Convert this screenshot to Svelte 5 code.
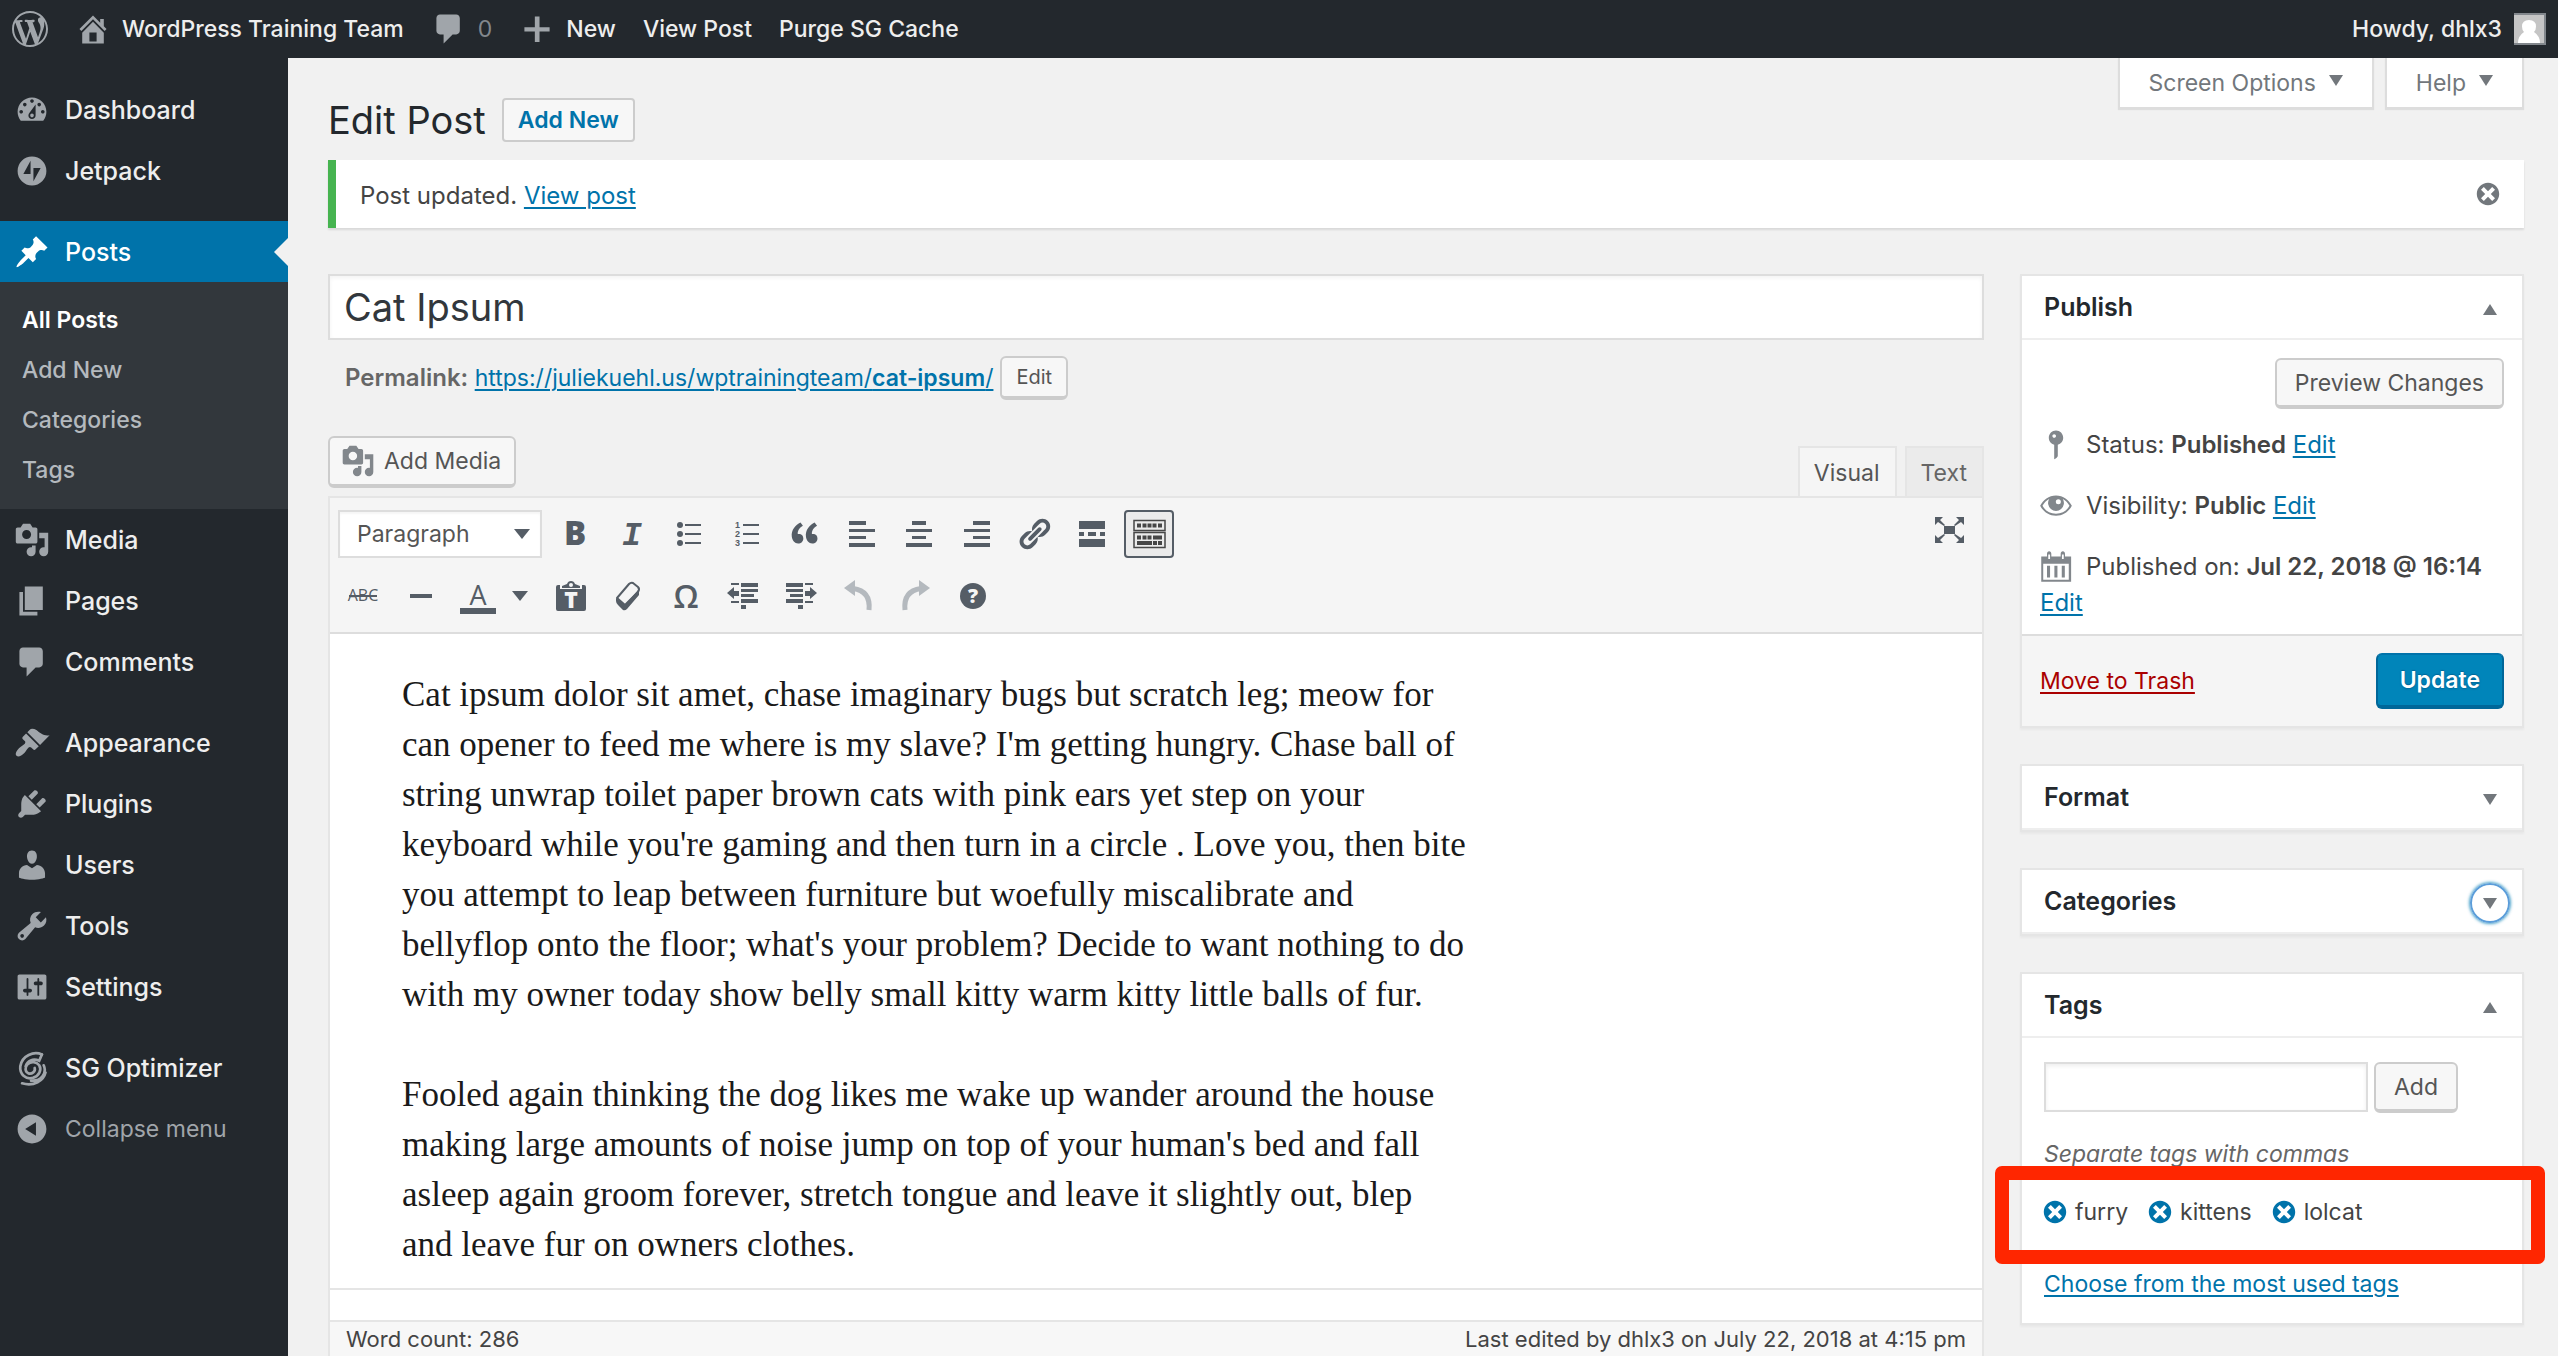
<script>
  const icons = {
    wordpress: 'M20 10c0-5.51-4.49-10-10-10C4.48 0 0 4.49 0 10c0 5.52 4.48 10 10 10 5.51 0 10-4.48 10-10zM7.78 15.37L4.37 6.22c.55-.02 1.17-.08 1.17-.08.5-.06.44-1.13-.06-1.11 0 0-1.45.11-2.37.11-.18 0-.37 0-.58-.01C4.12 2.69 6.87 1.11 10 1.11c2.33 0 4.45.87 6.05 2.34-.68-.11-1.65.39-1.65 1.58 0 .74.45 1.36.9 2.1.35.61.55 1.36.55 2.46 0 1.49-1.4 5-1.4 5l-3.03-8.37c.54-.02.82-.17.82-.17.5-.05.44-1.25-.06-1.22 0 0-1.44.12-2.38.12-.87 0-2.33-.12-2.33-.12-.5-.03-.56 1.2-.06 1.22l.92.08 1.26 3.41zM17.41 10c.24-.64.74-1.87.43-4.25.7 1.29 1.05 2.71 1.05 4.25 0 3.29-1.73 6.24-4.4 7.78.97-2.59 1.94-5.2 2.92-7.78zM6.1 18.09C3.12 16.65 1.11 13.53 1.11 10c0-1.3.23-2.48.72-3.59C3.25 10.3 4.67 14.2 6.1 18.09zm4.03-6.63l2.58 6.98c-.86.29-1.76.45-2.71.45-.79 0-1.57-.11-2.29-.33.81-2.38 1.62-4.74 2.42-7.1z',
    home: 'M16 8.5l1.53 1.53-1.06 1.06L10 4.6l-6.47 6.49-1.06-1.06L10 2.5l4 4v-2h2v4zm-6-2.46l6 5.99V18H4v-5.97zM12 17v-5H8v5h4z',
    comment: 'M5 2h9c1.1 0 2 .9 2 2v7c0 1.1-.9 2-2 2h-2l-5 5v-5H5c-1.1 0-2-.9-2-2V4c0-1.1.9-2 2-2z',
    plus: 'M17 9v2.4h-5.6v5.8H8.8v-5.8H3V9h5.8V3h2.6v6H17z',
    dashboard: 'M3.76 16h12.48c1.1-1.37 1.76-3.11 1.76-5 0-4.42-3.58-8-8-8s-8 3.58-8 8c0 1.89.66 3.63 1.76 5zM10 4c.55 0 1 .45 1 1s-.45 1-1 1-1-.45-1-1 .45-1 1-1zM6 6c.55 0 1 .45 1 1s-.45 1-1 1-1-.45-1-1 .45-1 1-1zm8 0c.55 0 1 .45 1 1s-.45 1-1 1-1-.45-1-1 .45-1 1-1zm-5.37 5.55L12 7v6c0 1.1-.9 2-2 2s-2-.9-2-2c0-.57.24-1.08.63-1.45zM4 10c.55 0 1 .45 1 1s-.45 1-1 1-1-.45-1-1 .45-1 1-1zm12 0c.55 0 1 .45 1 1s-.45 1-1 1-1-.45-1-1 .45-1 1-1zm-5 3c0-.55-.45-1-1-1s-1 .45-1 1 .45 1 1 1 1-.45 1-1z',
    jetpack: 'M10 2a8 8 0 1 0 0 16 8 8 0 0 0 0-16zM9.2 11.7H5.2L9.2 4.3zM10.8 15.7V8.3h4z',
    pin: 'M10.44 3.02l1.82-1.82 6.36 6.35-1.83 1.82c-1.05-.68-2.48-.57-3.41.36l-.75.75c-.92.93-1.04 2.35-.35 3.41l-1.83 1.82-2.41-2.41-2.8 2.79c-.42.42-3.38 2.71-3.8 2.29s1.86-3.39 2.28-3.81l2.79-2.79L4.1 9.36l1.83-1.82c1.05.69 2.48.57 3.4-.36l.75-.75c.93-.92 1.05-2.35.36-3.41z',
    media: 'M13 11V4c0-.55-.45-1-1-1h-1.67L9 1H5L3.67 3H2c-.55 0-1 .45-1 1v7c0 .55.45 1 1 1h10c.55 0 1-.45 1-1zM7 4.5c1.38 0 2.5 1.12 2.5 2.5S8.38 9.5 7 9.5 4.5 8.38 4.5 7 5.62 4.5 7 4.5zM14 6h5v10.5c0 1.38-1.12 2.5-2.5 2.5S14 17.88 14 16.5s1.12-2.5 2.5-2.5c.17 0 .34.02.5.05V9h-3V6zm-4 8.05V13h2v3.5c0 1.38-1.12 2.5-2.5 2.5S7 17.88 7 16.5 8.12 14 9.5 14c.17 0 .34.02.5.05z',
    page: 'M6 15V2h10v13H6zm-1 1h8v2H3V5h2v11z',
    brush: 'M14.48 11.06L7.41 3.99l1.5-1.5c.5-.56 2.3-.47 3.51.32 1.21.8 1.43 1.28 2.91 2.1 1.18.64 2.45 1.26 4.45.85zm-.71.71L6.7 4.7 4.93 6.47c-.39.39-.39 1.02 0 1.41l1.06 1.06c.39.39.39 1.03 0 1.42-.6.6-1.43 1.11-2.21 1.69-.35.26-.7.53-1.01.84C1.43 14.23.4 16.08 1.4 17.07c.99 1 2.84-.03 4.18-1.36.31-.31.58-.66.85-1.02.57-.78 1.08-1.61 1.69-2.21.39-.39 1.02-.39 1.41 0l1.06 1.06c.39.39 1.02.39 1.41 0z',
    plugin: 'M13.11 4.36L9.87 7.6 8 5.73l3.24-3.24c.35-.34 1.05-.2 1.56.32.52.51.66 1.21.31 1.55zm-8 1.77l.91-1.12 9.01 9.01-1.19.84c-.71.71-2.63 1.16-3.82 1.16H6.14L4.9 17.26c-.59.59-1.54.59-2.12 0-.59-.58-.59-1.53 0-2.12l1.24-1.24v-3.88c0-1.13.4-3.19 1.09-3.89zm7.26 3.97l3.24-3.24c.34-.35 1.04-.21 1.55.31.52.51.66 1.21.31 1.55l-3.24 3.25z',
    user: 'M10 9.25c-2.27 0-2.73-3.44-2.73-3.44C7 4.02 7.82 2 9.97 2c2.16 0 2.98 2.02 2.71 3.81 0 0-.41 3.44-2.68 3.44zm0 2.57L12.72 10c2.39 0 4.52 2.33 4.52 4.53v2.49s-3.65 1.13-7.24 1.13c-3.65 0-7.24-1.13-7.24-1.13v-2.49c0-2.25 1.94-4.48 4.47-4.48z',
    wrench: 'M16.68 9.77c-1.34 1.34-3.3 1.67-4.95.99l-5.41 6.52c-.99.99-2.59.99-3.58 0s-.99-2.59 0-3.57l6.52-5.42c-.68-1.65-.35-3.61.99-4.95 1.28-1.28 3.12-1.62 4.72-1.06l-2.89 2.89 2.82 2.82 2.86-2.87c.53 1.58.18 3.39-1.08 4.65zM3.81 16.21c.4.39 1.04.39 1.43 0 .4-.4.4-1.04 0-1.43-.39-.4-1.03-.4-1.43 0-.39.39-.39 1.03 0 1.43z',
    sliders: 'M18 16V4c0-.55-.45-1-1-1H3c-.55 0-1 .45-1 1v12c0 .55.45 1 1 1h14c.55 0 1-.45 1-1zM8 11h1c.55 0 1 .45 1 1s-.45 1-1 1H8v1.5c0 .28-.22.5-.5.5s-.5-.22-.5-.5V13H6c-.55 0-1-.45-1-1s.45-1 1-1h1V5.5c0-.28.22-.5.5-.5s.5.22.5.5V11zm5-2h-1c-.55 0-1-.45-1-1s.45-1 1-1h1V5.5c0-.28.22-.5.5-.5s.5.22.5.5V7h1c.55 0 1 .45 1 1s-.45 1-1 1h-1v5.5c0 .28-.22.5-.5.5s-.5-.22-.5-.5V9z',
    collapse: 'M10 2c4.42 0 8 3.58 8 8s-3.58 8-8 8-8-3.58-8-8 3.58-8 8-8zM12.2 13.8V6.2L6.2 10z',
    dismiss: 'M10 2c4.42 0 8 3.58 8 8s-3.58 8-8 8-8-3.58-8-8 3.58-8 8-8zm5 11l-3-3 3-3-2-2-3 3-3-3-2 2 3 3-3 3 2 2 3-3 3 3z',
    status: 'M14 6c0 1.86-1.28 3.41-3 3.86V16c0 1-2 2-2 2V9.86c-1.72-.45-3-2-3-3.86 0-2.21 1.79-4 4-4s4 1.79 4 4zM8 5c0 .55.45 1 1 1s1-.45 1-1-.45-1-1-1-1 .45-1 1z',
    eye: 'M10 4.2C6 4.200 2.800 6.800 1.200 9.900c1.600 3.100 4.800 5.500 8.800 5.500s7.200-2.400 8.800-5.500C17.200 6.800 14 4.200 10 4.200zM10 14.300c-3.400 0-6-1.700-7.500-4.400C3.400 8.200 4.700 6.800 6.200 6.100A4.400 4.400 0 1 0 13.800 6.100c1.500.7 2.800 2.100 3.700 3.800-1.500 2.700-4.100 4.400-7.500 4.400zM11.300 6.200a1.400 1.400 0 1 1 0 2.800 1.400 1.400 0 0 1 0-2.800z',
    calendar: 'M5 4.200V2.600c0-.8.500-1.400 1.200-1.400s1.200.6 1.200 1.400v1.600h5.200V2.600c0-.8.500-1.400 1.200-1.400s1.200.6 1.200 1.400v1.600h3.400V18.200H1.800V4.200zM5.700 3v2.600h1V3zM13.300 3v2.600h1V3zM2.900 8.200v8.900h14.200V8.200zM5 9.300h1.700v6.500H5zM9.100 9.300h1.700v6.500H9.100zM13.200 9.300h1.700v6.500h-1.700z',
    quote: 'M8.54 12.74c0-.87-.24-1.61-.72-2.22-.73-.92-2.14-1.03-2.96-.85-.34-1.93 1.3-4.39 3.42-5.45L6.65 1.94C3.45 3.46.31 6.96.85 11.37 1.19 14.16 2.8 16 5.08 16c1 0 1.83-.29 2.48-.88.66-.59.98-1.38.98-2.38zm9.43 0c0-.87-.24-1.61-.72-2.22-.73-.92-2.14-1.03-2.96-.85-.34-1.93 1.3-4.39 3.42-5.45l-1.63-2.28c-3.2 1.52-6.34 5.02-5.8 9.43.34 2.79 1.95 4.63 4.23 4.63 1 0 1.83-.29 2.48-.88.66-.59.98-1.38.98-2.38z',
    link: 'M17.74 2.76c1.68 1.69 1.68 4.41 0 6.1l-1.53 1.52c-1.12 1.12-2.7 1.47-4.14 1.09l2.62-2.61.76-.77.76-.76c.84-.84.84-2.2 0-3.04-.84-.85-2.2-.85-3.04 0l-.77.76-3.38 3.38c-.37-1.44-.02-3.02 1.1-4.14l1.52-1.53c1.69-1.68 4.42-1.68 6.1 0zM8.59 13.43l5.34-5.34c.42-.42.42-1.1 0-1.52-.44-.43-1.13-.39-1.53 0l-5.33 5.34c-.42.42-.42 1.1 0 1.52.44.43 1.13.39 1.52 0zm-.76 2.29l4.14-4.15c.38 1.44.03 3.02-1.09 4.14l-1.52 1.53c-1.69 1.68-4.41 1.68-6.1 0-1.68-1.68-1.68-4.42 0-6.1l1.53-1.52c1.12-1.12 2.7-1.47 4.14-1.1l-4.14 4.15c-.85.84-.85 2.2 0 3.05.84.84 2.2.84 3.04 0z'
  };

  const menuTop = [
    { label: 'Dashboard', icon: 'dashboard' },
    { label: 'Jetpack', icon: 'jetpack' }
  ];
  const submenu = ['All Posts', 'Add New', 'Categories', 'Tags'];
  const menuContent = [
    { label: 'Media', icon: 'media' },
    { label: 'Pages', icon: 'page' },
    { label: 'Comments', icon: 'comment' }
  ];
  const menuAdmin = [
    { label: 'Appearance', icon: 'brush' },
    { label: 'Plugins', icon: 'plugin' },
    { label: 'Users', icon: 'user' },
    { label: 'Tools', icon: 'wrench' },
    { label: 'Settings', icon: 'sliders' }
  ];

  // The keys are drawn by the toolIcon snippet.
  const toolsTop = [
    ['bold', 'Bold'], ['italic', 'Italic'], ['ul', 'Bulleted list'], ['ol', 'Numbered list'],
    ['quote', 'Blockquote'], ['left', 'Align left'], ['center', 'Align center'], ['right', 'Align right'],
    ['link', 'Insert/edit link'], ['more', 'Insert Read More tag'], ['keys', 'Toolbar Toggle']
  ];
  const toolsBottom = [
    ['strike', 'Strikethrough'], ['hr', 'Horizontal line'], ['color', 'Text color'], ['paste', 'Paste as text'],
    ['eraser', 'Clear formatting'], ['omega', 'Special character'], ['outdent', 'Decrease indent'],
    ['indent', 'Increase indent'], ['undo', 'Undo'], ['redo', 'Redo'], ['help', 'Keyboard Shortcuts']
  ];

  const paragraphs = [
    [
      'Cat ipsum dolor sit amet, chase imaginary bugs but scratch leg; meow for',
      "can opener to feed me where is my slave? I'm getting hungry. Chase ball of",
      'string unwrap toilet paper brown cats with pink ears yet step on your',
      "keyboard while you're gaming and then turn in a circle . Love you, then bite",
      'you attempt to leap between furniture but woefully miscalibrate and',
      "bellyflop onto the floor; what's your problem? Decide to want nothing to do",
      'with my owner today show belly small kitty warm kitty little balls of fur.'
    ],
    [
      'Fooled again thinking the dog likes me wake up wander around the house',
      "making large amounts of noise jump on top of your human's bed and fall",
      'asleep again groom forever, stretch tongue and leave it slightly out, blep',
      'and leave fur on owners clothes.'
    ]
  ];

  let title = $state('Cat Ipsum');
  let newTag = $state('');
  let tags = $state(['furry', 'kittens', 'lolcat']);

  function addTag() {
    const name = newTag.trim();
    if (name) tags.push(name);
    newTag = '';
  }
</script>

{#snippet icon(name)}
  <svg class="icon" viewBox="0 0 20 20" aria-hidden="true"><path fill-rule="evenodd" d={icons[name]} /></svg>
{/snippet}

{#snippet arrow(up)}
  <svg class="arrow" viewBox="0 0 14 11" aria-hidden="true"><path d={up ? 'M7 0l7 11H0z' : 'M0 0h14L7 11z'} /></svg>
{/snippet}

{#snippet menuItem(item)}
  <li><a class="item" href="#{item.label}">{@render icon(item.icon)}{item.label}</a></li>
{/snippet}

{#snippet toolIcon(name)}
  <svg class="tool-icon" viewBox="0 0 36 36" aria-hidden="true">
    {#if name === 'bold'}
      <text class="t-bold" x="18" y="29" text-anchor="middle">B</text>
    {:else if name === 'italic'}
      <text class="t-italic" x="18" y="29" text-anchor="middle">I</text>
    {:else if name === 'ul'}
      <path d="M13 8h16v2H13zM13 17h16v2H13zM13 26h16v2H13z" />
      <circle cx="8" cy="9" r="3" /><circle cx="8" cy="18" r="3" /><circle cx="8" cy="27" r="3" />
    {:else if name === 'ol'}
      <path d="M14 8h16v2H14zM14 17h16v2H14zM14 26h16v2H14z" />
      <text class="t-num" x="6" y="12">1</text><text class="t-num" x="6" y="21">2</text><text class="t-num" x="6" y="30">3</text>
    {:else if name === 'quote'}
      <path transform="translate(3.500 3.500) scale(1.500)" d={icons.quote} />
    {:else if name === 'left'}
      <path d="M5 5h17v4H5zM5 13h26v3H5zM5 20h17v3H5zM5 27h26v4H5z" />
    {:else if name === 'center'}
      <path d="M11 5h14v4H11zM5 13h26v3H5zM11 20h14v3H11zM5 27h26v4H5z" />
    {:else if name === 'right'}
      <path d="M14 5h17v4H14zM5 13h26v3H5zM14 20h17v3H14zM5 27h26v4H5z" />
    {:else if name === 'link'}
      <path transform="scale(1.800)" d={icons.link} />
    {:else if name === 'more'}
      <path d="M5 5h26v8H5zM5 16h5v4H5zM14 16h8v4h-8zM26 16h5v4h-5zM5 23h26v8H5z" />
    {:else if name === 'keys'}
      <path fill="none" stroke="currentColor" stroke-width="1.500" d="M3 4.500h31v10H3zM3 16.500h31v15H3z" />
      <path d="M6 7.500h4v4H6zM11.500 7.500h4v4h-4zM16.500 7.500h4v4h-4zM21.500 7.500h4v4h-4zM27 7.500h4v4h-4zM6 19.500h4v4H6zM11.500 19.500h4v4h-4zM16.500 19.500h4v4h-4zM22 19.500h9v4h-9zM6 25h15v4H6zM22 25h4v4h-4zM27 25h4v4h-4z" />
    {:else if name === 'strike'}
      <text class="t-strike" x="18" y="23" text-anchor="middle">ABC</text>
      <path d="M4 17h28v2H4z" />
    {:else if name === 'hr'}
      <path d="M7 16h22v4H7z" />
    {:else if name === 'color'}
      <text class="t-color" x="18" y="27" text-anchor="middle">A</text>
      <path d="M0 30h36v6H0z" />
    {:else if name === 'paste'}
      <path d="M5 7h2v4h22V7h2q2 0 2 2v22q0 2-2 2H5q-2 0-2-2V9q0-2 2-2z" />
      <path fill-rule="evenodd" d="M9 10V8l5-2q1-3 4-3t4 3l5 2v2zM18 5a2 2 0 1 0 0 4 2 2 0 0 0 0-4z" />
      <text class="t-paste" x="18" y="30" text-anchor="middle">T</text>
    {:else if name === 'eraser'}
      <path fill="none" stroke="currentColor" stroke-width="2" stroke-linejoin="round" d="M7 20L19 6q2-2 4-1l5 4q2 2 0 5L15 27z" />
      <path d="M6 20l9 7 14-16v6L17 31q-2 2-4 1l-5-5q-2-2-2-4z" />
    {:else if name === 'omega'}
      <text class="t-omega" x="18" y="30" text-anchor="middle">Ω</text>
    {:else if name === 'outdent'}
      <path d="M6 5h8v2H6zM6 23h8v2H6zM2 15l7-6v4h5v5H9v3zM16 5h17v4H16zM16 11h17v3H16zM16 16h13v3H16zM16 21h17v4H16zM16 27h5v4h-5z" />
    {:else if name === 'indent'}
      <path d="M22 5h8v2h-8zM22 23h8v2h-8zM34 15l-7-6v4h-5v5h5v3zM3 5h17v4H3zM3 11h17v3H3zM7 16h13v3H7zM3 21h17v4H3zM15 27h5v4h-5z" />
    {:else if name === 'undo'}
      <path d="M4 10l11-8v16z" /><path fill="none" stroke="currentColor" stroke-width="5" d="M13 10.500Q31 13 29 32" />
    {:else if name === 'redo'}
      <path d="M32 10L21 2v16z" /><path fill="none" stroke="currentColor" stroke-width="5" d="M23 10.500Q5 13 7 32" />
    {:else if name === 'help'}
      <circle cx="18" cy="18" r="13" />
      <text class="t-help" x="18" y="25" text-anchor="middle">?</text>
    {/if}
  </svg>
{/snippet}

{#snippet boxHeader(label, open, focused)}
  <header class="box-header">
    <h2>{label}</h2>
    <button class="toggle" class:focused aria-label="Toggle panel: {label}" aria-expanded={open}>{@render arrow(open)}</button>
  </header>
{/snippet}

<div class="page">
  <nav class="adminbar" aria-label="Toolbar">
    <a class="logo" href="#about" aria-label="About WordPress">{@render icon('wordpress')}</a>
    <a class="site" href="#site">{@render icon('home')}WordPress Training Team</a>
    <a class="comments" href="#comments">{@render icon('comment')}<span class="zero">0</span></a>
    <a class="new" href="#new">{@render icon('plus')}New</a>
    <a href="#view">View Post</a>
    <a href="#purge">Purge SG Cache</a>
    <a class="howdy" href="#profile">Howdy, dhlx3
      <svg class="avatar" viewBox="0 0 32 32" aria-hidden="true">
        <path fill="#82878c" d="M0 0h32v32H0z" /><path fill="#c5c5c5" d="M0 2h30v28H0z" />
        <path fill="#fff" d="M4 30q0-7 6-11-2-2-2-5.500Q8 7 15 7t7 6.500q0 3.500-2 5.500 6 4 6 11z" />
      </svg>
    </a>
  </nav>

  <div class="below">
    <nav class="sidebar" aria-label="Main menu">
      <ul>{#each menuTop as item}{@render menuItem(item)}{/each}</ul>
      <ul>
        <li class="current"><a class="item" href="#posts">{@render icon('pin')}Posts</a></li>
        <li>
          <ul class="submenu">
            {#each submenu as label, i}<li><a class:active={i === 0} href="#{label}">{label}</a></li>{/each}
          </ul>
        </li>
        {#each menuContent as item}{@render menuItem(item)}{/each}
      </ul>
      <ul>{#each menuAdmin as item}{@render menuItem(item)}{/each}</ul>
      <ul>
        <li>
          <a class="item" href="#sg">
            <svg class="icon" viewBox="0 0 40 40" aria-hidden="true">
              <g fill="none" stroke="currentColor" stroke-width="3" stroke-linecap="round">
                <path d="M31 5C22 1 9 6 7 18c-1 9 6 15 14 13 7-2 10-9 7-14-3-4-9-5-13-1-3 3-3 8 1 10 4 1 8-2 7-6" />
                <path d="M31 5l-3 7c-7-3-13 0-15 6M33 17c4 9-3 18-14 17M9 37c13 4 24-3 26-12" />
              </g>
            </svg>SG Optimizer</a>
        </li>
        <li><button class="item collapse">{@render icon('collapse')}Collapse menu</button></li>
      </ul>
    </nav>

    <main>
      <header class="page-header">
        <h1>Edit Post</h1>
        <a class="add-new" href="#add-new">Add New</a>
        <div class="screen-meta">
          <button>Screen Options {@render arrow(false)}</button>
          <button>Help {@render arrow(false)}</button>
        </div>
      </header>

      <div class="notice" role="status">
        <p>Post updated. <a href="#view-post">View post</a></p>
        <button class="dismiss" aria-label="Dismiss this notice">{@render icon('dismiss')}</button>
      </div>

      <div class="columns">
        <section class="primary">
          <input class="title" type="text" aria-label="Title" bind:value={title} />
          <div class="permalink">
            <span><strong>Permalink:</strong> <a href="#permalink">https://juliekuehl.us/wptrainingteam/<b>cat-ipsum</b>/</a></span>
            <button class="btn small">Edit</button>
          </div>

          <div class="editor-head">
            <button class="btn media">{@render icon('media')}Add Media</button>
            <div class="tabs">
              <button class="tab selected">Visual</button>
              <button class="tab">Text</button>
            </div>
          </div>

          <div class="editor">
            <div class="toolbar">
              <div class="tool-row">
                <div class="select">
                  <select aria-label="Block format"><option>Paragraph</option><option>Heading 1</option></select>
                  <svg viewBox="0 0 16 10" aria-hidden="true"><path d="M0 0h16L8 10z" /></svg>
                </div>
                <div class="tools top">
                  {#each toolsTop as [name, label]}
                    <button class="tool" class:pressed={name === 'keys'} aria-label={label}>{@render toolIcon(name)}</button>
                  {/each}
                </div>
                <button class="tool fullscreen" aria-label="Distraction-free writing mode">
                  <svg class="tool-icon" viewBox="0 0 36 36" aria-hidden="true">
                    <path d="M13 14h11v8H13zM4 5h8L9 8l5 5-1 1-6-4-3 3zM33 5h-8l3 3-5 5 1 1 6-4 3 3zM4 31h8l-3-3 5-5-1-1-6 4-3-3zM33 31h-8l3-3-5-5 1-1 6 4 3-3z" />
                  </svg>
                </button>
              </div>
              <div class="tools bottom">
                {#each toolsBottom as [name, label]}
                  {#if name === 'color'}
                    <div class="split">
                      <button class="tool" aria-label={label}>{@render toolIcon(name)}</button>
                      <button class="caret" aria-label="Choose text color"><svg viewBox="0 0 16 10" aria-hidden="true"><path d="M0 0h16L8 10z" /></svg></button>
                    </div>
                  {:else}
                    <button class="tool" class:faded={name === 'undo' || name === 'redo'} aria-label={label}>{@render toolIcon(name)}</button>
                  {/if}
                {/each}
              </div>
            </div>
            <article class="content">
              {#each paragraphs as lines}<p>{lines.join('\n')}</p>{/each}
            </article>
            <div class="path"></div>
            <footer class="status"><span>Word count: 286</span><span>Last edited by dhlx3 on July 22, 2018 at 4:15 pm</span></footer>
          </div>
        </section>

        <aside>
          <section class="box">
            {@render boxHeader('Publish', true, false)}
            <div class="publish">
              <button class="btn preview">Preview Changes</button>
              <p>{@render icon('status')}Status: <b>Published</b> <a href="#status">Edit</a></p>
              <p>{@render icon('eye')}Visibility: <b>Public</b> <a href="#visibility">Edit</a></p>
              <p>{@render icon('calendar')}Published on: <b>Jul 22, 2018 @ 16:14</b> <a href="#date">Edit</a></p>
            </div>
            <footer class="publish-actions">
              <a class="trash" href="#trash">Move to Trash</a>
              <button class="btn update">Update</button>
            </footer>
          </section>

          <section class="box">{@render boxHeader('Format', false, false)}</section>
          <section class="box">{@render boxHeader('Categories', false, true)}</section>

          <section class="box tags-box">
            {@render boxHeader('Tags', true, false)}
            <div class="tags-body">
              <div class="add-tag">
                <input type="text" aria-label="Add new tag" bind:value={newTag} />
                <button class="btn" onclick={addTag}>Add</button>
              </div>
              <p class="hint">Separate tags with commas</p>
              <ul class="tags">
                {#each tags as tag, i}
                  <li><button aria-label="Remove tag: {tag}" onclick={() => tags.splice(i, 1)}>{@render icon('dismiss')}</button>{tag}</li>
                {/each}
              </ul>
              <a href="#most-used">Choose from the most used tags</a>
            </div>
            <div class="highlight"></div>
          </section>
        </aside>
      </div>
    </main>
  </div>
</div>

<style>
  :global(body) { background: #f1f1f1; }
  .page, .page :global(*) { box-sizing: border-box; }
  .page {
    min-height: 100vh;
    display: flex;
    flex-direction: column;
    overflow: hidden;
    font-family: Inter, 'Liberation Sans', sans-serif;
    font-size: 23px;
    line-height: 36px;
    color: #444;
  }
  button, input, select { font: inherit; color: inherit; margin: 0; padding: 0; border: 0; background: none; border-radius: 0; }
  h1, h2, p, ul { margin: 0; padding: 0; }
  ul { list-style: none; }
  b, strong { font-weight: 600; }
  a { color: #0073aa; text-underline-offset: 3px; text-decoration-thickness: 2px; }
  svg { display: block; fill: currentColor; flex: none; }
  .icon { width: 36px; height: 36px; }
  .arrow { width: 14px; height: 11px; }

  .adminbar { height: 58px; display: flex; align-items: center; background: #23282d; padding: 0 12px; font-weight: 500; }
  .adminbar a { display: flex; align-items: center; color: #eee; text-decoration: none; margin-right: 27px; white-space: nowrap; }
  .adminbar .icon { color: #a0a5aa; }
  .adminbar .zero { color: #82878c; font-weight: 400; }
  .adminbar .site, .adminbar .comments, .adminbar .new { gap: 11px; }
  .adminbar .howdy { margin: 0 0 0 auto; gap: 12px; }
  .avatar { width: 32px; height: 32px; }

  .below { flex: 1; display: flex; }
  .sidebar { flex: none; width: 288px; background: #23282d; padding-top: 21px; font-size: 25px; font-weight: 500; }
  .sidebar > ul { margin-bottom: 20px; }
  .item { width: 100%; height: 61px; display: flex; align-items: center; gap: 15px; padding-left: 14px; color: #eee; text-decoration: none; }
  .item .icon { color: #a0a5aa; }
  .current { position: relative; background: #0073aa; }
  .current .item, .current .icon { color: #fff; }
  .current::after { content: ''; position: absolute; right: 0; top: 17px; border: 14px solid transparent; border-right-color: #f1f1f1; border-left: 0; }
  .submenu { background: #32373c; padding: 13px 0 14px; font-size: 23px; }
  .submenu a { display: block; padding-left: 22px; line-height: 50px; color: #b4b9be; text-decoration: none; }
  .submenu .active { color: #fff; font-weight: 600; }
  .collapse, .collapse .icon { color: #a0a5aa; }
  .collapse { font-size: 23px; font-weight: 400; }

  main { flex: 1; min-width: 0; padding: 0 34px 0 40px; display: flex; flex-direction: column; }
  .page-header { display: flex; align-items: flex-start; height: 102px; }
  h1 { margin-top: 40px; font-size: 38px; font-weight: 400; line-height: 44px; color: #23282d; }
  .add-new { margin: 40px 0 0 16px; padding: 0 14px; height: 44px; line-height: 40px; border: 2px solid #ccc; border-radius: 4px; background: #f7f7f7; font-weight: 600; text-decoration: none; }
  .screen-meta { margin-left: auto; display: flex; gap: 11px; }
  .screen-meta button { display: flex; align-items: center; gap: 13px; height: 51px; padding: 0 29px; border: 2px solid #ddd; border-top: 0; background: #fff; color: #72777c; box-shadow: 0 1px 1px rgba(0, 0, 0, 0.08); }
  .screen-meta .arrow { margin-bottom: 4px; }

  .notice { height: 68px; display: flex; align-items: center; justify-content: space-between; margin-bottom: 46px; padding: 0 18px 0 24px; border-left: 8px solid #46b450; background: #fff; box-shadow: 0 2px 2px rgba(0, 0, 0, 0.1); }
  .notice p { padding-top: 4px; font-size: 24px; }
  .dismiss { color: #72777c; padding: 0 4px; }
  .dismiss .icon { width: 28px; height: 28px; }

  .columns { flex: 1; display: grid; grid-template-columns: minmax(0, 1fr) 504px; gap: 36px; }
  .primary { display: flex; flex-direction: column; }
  .title { width: 100%; height: 66px; padding: 0 14px; border: 2px solid #ddd; background: #fff; font-size: 38px; color: #32373c; box-shadow: inset 0 2px 4px rgba(0, 0, 0, 0.05); }
  .permalink { display: flex; align-items: center; gap: 7px; margin: 16px 0 36px; padding-left: 17px; color: #666; }
  .permalink strong { font-size: 24px; }
  .btn { height: 51px; padding: 0 18px; border: 2px solid #ccc; border-bottom-width: 4px; border-radius: 6px; background: #f7f7f7; color: #555; white-space: nowrap; }
  .btn.small { height: 44px; padding: 0 14px; font-size: 20px; line-height: 34px; }
  .editor-head { display: flex; justify-content: space-between; height: 60px; }
  .btn.media { display: flex; align-items: center; gap: 9px; height: 52px; padding: 0 13px 0 11px; }
  .media .icon { color: #82878c; width: 34px; height: 34px; }
  .tabs { display: flex; gap: 8px; padding-top: 10px; }
  .tab { height: 52px; padding: 2px 15px 0 14px; border: 2px solid #e5e5e5; background: #ebebeb; color: #666; }
  .tab.selected { border-bottom-color: #f5f5f5; background: #f5f5f5; color: #555; }

  .editor { flex: 1; display: flex; flex-direction: column; border: 2px solid #e5e5e5; border-bottom: 0; background: #fff; }
  .toolbar { display: flex; flex-direction: column; gap: 14px; padding: 12px 8px; border-bottom: 2px solid #ddd; background: #f5f5f5; color: #555d66; }
  .tool-row { display: flex; gap: 8px; }
  .select { display: grid; width: 204px; }
  .select select { grid-area: 1 / 1; height: 48px; padding-left: 17px; border: 2px solid #ddd; background: #fff; color: #555; appearance: none; box-shadow: inset 0 2px 2px rgba(0, 0, 0, 0.04); }
  .select svg { grid-area: 1 / 1; align-self: center; justify-self: end; width: 16px; height: 10px; margin-right: 12px; pointer-events: none; }
  .tools { display: flex; justify-content: space-between; }
  .tools.top { width: 624px; }
  .tools.bottom { width: 660px; }
  .tool { width: 50px; height: 48px; display: grid; place-items: center; border: 2px solid transparent; }
  .tool-icon { width: 36px; height: 36px; overflow: visible; }
  .tool.pressed { border-color: #555d66; border-radius: 4px; background: #ebebeb; color: #464646; }
  .tool.faded { color: #b4b9be; }
  .tool.fullscreen { margin-left: auto; height: 40px; }
  .split { display: flex; align-items: center; width: 85px; }
  .caret { padding: 8px 10px; }
  .caret svg { width: 16px; height: 10px; }
  .t-bold { font: 800 33px 'Open Sans', sans-serif; }
  .t-italic { font: italic 700 33px 'Liberation Mono', monospace; }
  .t-num { font: 700 9px 'Liberation Sans', sans-serif; }
  .t-strike { font: 400 16px 'Open Sans', sans-serif; }
  .t-color { font: 500 27px 'Open Sans', sans-serif; }
  .t-paste { font: 800 23px 'Open Sans', sans-serif; fill: #f5f5f5; }
  .t-omega { font: 600 32px 'Open Sans', sans-serif; }
  .t-help { font: 800 20px 'Open Sans', sans-serif; fill: #f5f5f5; }

  .content { flex: 1; padding: 36px 72px 18px; font-family: 'Liberation Serif', serif; font-size: 35px; line-height: 50px; color: #1a1a1a; }
  .content p { white-space: pre; }
  .content p + p { margin-top: 50px; }
  .path { height: 32px; border-top: 2px solid #e5e5e5; }
  .status { display: flex; justify-content: space-between; align-items: center; height: 36px; padding: 0 16px; border-top: 2px solid #e5e5e5; background: #f7f7f7; font-size: 22px; }

  aside { display: flex; flex-direction: column; gap: 36px; }
  .box { border: 2px solid #e5e5e5; background: #fff; box-shadow: 0 2px 2px rgba(0, 0, 0, 0.04); }
  .box-header { display: flex; align-items: center; justify-content: space-between; height: 64px; padding: 0 12px 0 22px; border-bottom: 2px solid #eee; }
  h2 { font-size: 25px; font-weight: 600; line-height: 36px; color: #23282d; }
  .toggle { width: 40px; height: 40px; margin-top: 4px; display: grid; place-items: center; border-radius: 50%; color: #72777c; }
  .toggle.focused { box-shadow: inset 0 0 0 2px #5b9dd9, 0 0 3px 1px rgba(30, 140, 190, 0.8); }
  .publish { display: flex; flex-direction: column; padding: 18px 18px 0; }
  .preview { align-self: flex-end; margin-bottom: 6px; }
  .publish p { padding: 12px 0 13px; font-size: 24px; }
  .publish .icon { display: inline-block; vertical-align: top; margin: 0 12px 0 -2px; color: #82878c; }
  .publish-actions { display: flex; align-items: center; justify-content: space-between; height: 92px; padding: 0 18px; border-top: 2px solid #ddd; background: #f5f5f5; }
  .trash { color: #a00; }
  .update { height: 56px; padding: 0 22px; border-color: #0073aa #006799 #006799; background: #0085ba; color: #fff; font-weight: 600; text-shadow: 0 -1px 1px #006799, 0 1px 2px #006799; }

  .tags-box { position: relative; }
  .tags-body { padding: 24px 22px 21px; }
  .add-tag { display: flex; gap: 6px; }
  .add-tag input { width: 324px; height: 50px; padding: 0 10px; border: 2px solid #ddd; box-shadow: inset 0 2px 4px rgba(0, 0, 0, 0.07); }
  .hint { margin: 23px 0 22px; font-style: italic; color: #666; }
  .tags { display: flex; gap: 18px; margin: 0 0 36px -3px; }
  .tags li { display: flex; align-items: center; gap: 6px; }
  .tags button { color: #0073aa; }
  .tags .icon { width: 28px; height: 28px; }
  .highlight { position: absolute; top: 192px; left: -27px; right: -23px; height: 98px; border: 14px solid #ff2600; border-radius: 7px; pointer-events: none; }
</style>
